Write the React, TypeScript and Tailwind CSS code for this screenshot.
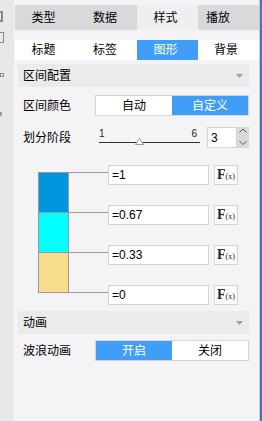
import React from "react";

const Seg = ({ left, right, active }: { left: string; right: string; active: 0 | 1 }) => (
  <div className="w-[154px] h-[21px] border border-[#d4d4d4] flex bg-white">
    <div className={`flex-1 flex items-center justify-center ${active === 0 ? "bg-[#409ef9] text-white" : "bg-white text-black"}`}>{left}</div>
    <div className={`flex-1 flex items-center justify-center ${active === 1 ? "bg-[#409ef9] text-white" : "bg-white text-black"}`}>{right}</div>
  </div>
);

const Header = ({ title }: { title: string }) => (
  <div className="h-[23px] w-[231px] bg-[#ebebeb] flex items-center justify-between pl-[5px] pr-[6px]">
    <span>{title}</span>
    <svg width="7" height="4" viewBox="0 0 7 4">
      <polygon points="0,0 7,0 3.5,4" fill="#a0a0a0" />
    </svg>
  </div>
);

const Fx = () => (
  <div className="w-[24px] h-[20px] border border-[#d4d4d4] bg-white flex items-center justify-center text-[#222]">
    <span className="font-[family-name:'Liberation_Serif',serif] text-[14px] leading-none font-bold">F</span>
    <span className="font-[family-name:'Liberation_Serif',serif] text-[8px] leading-none mt-[3px]">(x)</span>
  </div>
);

const rows = [
  { v: "=1", color: "bg-[#0096de]", seg: true },
  { v: "=0.67", color: "bg-[#00ffff]", seg: true },
  { v: "=0.33", color: "bg-[#f7dd8b]", seg: true },
  { v: "=0", color: "", seg: false },
];

export default function App() {
  return (
    <div className="flex w-[262px] h-[421px] overflow-hidden bg-[#f4f4f6] text-[12px] text-black font-[family-name:'Liberation_Sans','Noto_Sans_CJK_SC',sans-serif]">
      {/* left strip */}
      <div className="w-[14px] shrink-0 bg-[#e8e8e8] flex flex-col">
        <div className="mt-[11px] w-[3px] h-[11px] border-y-2 border-r-2 border-[#888]" />
        <div className="mt-[10px] w-[4px] h-[11px] border-y border-r border-[#888]" />
        <div className="mt-[30px] w-[4px] h-[4px] border border-[#888]" />
        <div className="mt-[35px] w-[2px] h-[4px] bg-[#999]" />
      </div>

      {/* main */}
      <div className="w-[246px] shrink-0 border-r border-[#c8c8cc] flex flex-col pl-px">
        {/* tabs */}
        <div className="mt-[5px] h-[25px] w-[244px] bg-[#d9d9dc] flex">
          <div className="w-[61px] flex items-center justify-center pr-[4px]">类型</div>
          <div className="w-[61px] flex items-center justify-center pr-[3px]">数据</div>
          <div className="w-[61px] flex items-center justify-center pr-[4px] bg-[#efeff1]">样式</div>
          <div className="w-[40px] flex items-center justify-center">播放</div>
        </div>
        {/* subtabs */}
        <div className="mt-[10px] h-[20px] w-[244px] bg-white flex">
          <div className="w-[61px] flex items-center justify-center pr-[4px]">标题</div>
          <div className="w-[61px] flex items-center justify-center pr-[3px]">标签</div>
          <div className="w-[61px] flex items-center justify-center pr-[4px] bg-[#409ef9] text-white">图形</div>
          <div className="w-[61px] flex items-center justify-center pr-[5px]">背景</div>
        </div>

        <div className="ml-[3px] flex flex-col">
          <div className="mt-[4px]">
            <Header title="区间配置" />
          </div>
          <div className="mt-[8px] h-[21px] flex items-center">
            <div className="w-[77px] pl-[5px]">区间颜色</div>
            <Seg left="自动" right="自定义" active={1} />
          </div>
          <div className="mt-[11px] h-[21px] flex items-center">
            <div className="w-[77px] pl-[5px]">划分阶段</div>
            <div className="w-[112px] h-[21px] pl-[4px] flex flex-col">
              <div className="relative w-[101px] flex flex-col">
                <div className="mt-[1px] h-[12px] flex justify-between pr-[3px] text-[10px] leading-[12px] text-[#222]">
                  <span>1</span>
                  <span>6</span>
                </div>
                <div className="mt-[2px] h-px w-[101px] bg-[#333]" />
                <svg className="absolute left-[36px] top-[11px]" width="9" height="7" viewBox="0 0 9 7">
                  <polygon points="4.5,0.5 8.5,6.5 0.5,6.5" fill="#fff" stroke="#999" strokeWidth="1" />
                </svg>
              </div>
            </div>
            <div className="w-[30px] h-[21px] border border-[#d4d4d4] bg-white flex items-center pl-[3px]">3</div>
            <div className="w-[12px] h-[21px] bg-[#d9d9d9]">
              <svg width="12" height="21" viewBox="0 0 12 21">
                <polyline points="2.5,5.5 6,2 9.5,5.5" fill="none" stroke="#555" strokeWidth="1" />
                <polyline points="2.5,14 6,17.5 9.5,14" fill="none" stroke="#555" strokeWidth="1" />
              </svg>
            </div>
          </div>

          {/* color stack */}
          <div className="mt-[17px] flex flex-col">
            {rows.map((r, i) => (
              <div key={i} className={`flex items-start ${i < 3 ? "h-[40px]" : "h-[20px]"}`}>
                {r.seg ? (
                  <div className={`ml-[20px] mt-[7px] w-[31px] h-[40px] border-x border-t border-[#999] ${r.color}`} />
                ) : (
                  <div className="ml-[20px] mt-[7px] w-[31px] h-px bg-[#999]" />
                )}
                <div className="mt-[7px] w-[39px] h-px bg-[#999]" />
                <div className="w-[101px] h-[20px] border border-[#d4d4d4] bg-white flex items-center pl-[3px]">{r.v}</div>
                <div className="ml-[5px]">
                  <Fx />
                </div>
              </div>
            ))}
          </div>

          <div className="mt-[6px]">
            <Header title="动画" />
          </div>
          <div className="mt-[6px] h-[21px] flex items-center">
            <div className="w-[77px] pl-[5px]">波浪动画</div>
            <Seg left="开启" right="关闭" active={0} />
          </div>
        </div>
      </div>

      <div className="w-[2px] shrink-0 bg-[#2a7fd6]" />
    </div>
  );
}
